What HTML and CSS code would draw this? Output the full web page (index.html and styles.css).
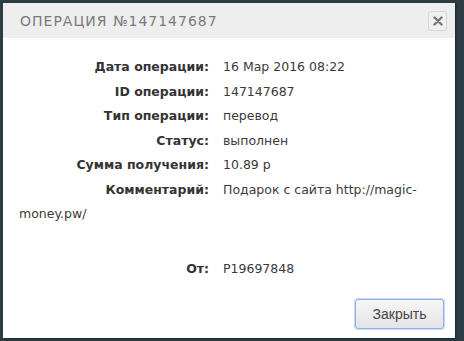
FILE: index.html
```html
<!DOCTYPE html>
<html lang="ru">
<head>
    <meta charset="UTF-8">
    <title>Операция</title>
    <link rel="stylesheet" href="styles.css">
</head>
<body>
    <div class="dialog">
        <div class="dialog-head">
            <span class="dialog-title">Операция №147147687</span>
            <button class="close" type="button">
                <svg width="10" height="10" viewBox="0 0 10 10"><path d="M1.5 1.5 L8.5 8.5 M8.5 1.5 L1.5 8.5" stroke="#777" stroke-width="2.4" stroke-linecap="round"/></svg>
            </button>
        </div>
        <div class="dialog-body">
            <div class="row"><span class="label">Дата операции:</span>16 Мар 2016 08:22</div>
            <div class="row"><span class="label">ID операции:</span>147147687</div>
            <div class="row"><span class="label">Тип операции:</span>перевод</div>
            <div class="row"><span class="label">Статус:</span>выполнен</div>
            <div class="row"><span class="label">Сумма получения:</span>10.89 р</div>
            <div class="row"><span class="label">Комментарий:</span>Подарок с сайта http://magic-money.pw/</div>
            <div class="row row-gap"><span class="label">От:</span>P19697848</div>
        </div>
        <div class="dialog-foot">
            <button class="btn" type="button">Закрыть</button>
        </div>
    </div>
</body>
</html>
```

FILE: styles.css
```css
html,
body {
    margin: 0;
    height: 100%;
    background: #2e3d43;
}

body {
    padding: 3px 9px 3px 3px;
    box-sizing: border-box;
    font-family: "DejaVu Sans", sans-serif;
}

.dialog {
    background: #fff;
    height: 335px;
    display: flex;
    flex-direction: column;
    box-shadow: 1px 1px 2px rgba(0, 0, 0, 0.4);
}

.dialog-head {
    background: #eee;
    height: 35px;
    display: flex;
    align-items: center;
    justify-content: space-between;
    padding: 0 8px 0 17px;
}

.dialog-title {
    color: #7a7a7a;
    font-size: 14px;
    letter-spacing: 1px;
    text-transform: uppercase;
}

.close {
    width: 19px;
    height: 20px;
    padding: 0;
    border: 1px solid #d6d6d6;
    border-radius: 3px;
    background: #f0f0f0;
    display: flex;
    align-items: center;
    justify-content: center;
}

.dialog-body {
    flex: 1;
    padding: 17px 10px 0 16px;
    font-size: 12.5px;
    line-height: 24.5px;
    color: #3a3a3a;
}

.label {
    display: inline-block;
    width: 190px;
    margin-right: 14px;
    text-align: right;
    font-weight: bold;
    color: #333;
}

.row-gap {
    margin-top: 30px;
}

.dialog-foot {
    display: flex;
    justify-content: flex-end;
    padding: 0 11px 9px 0;
}

.btn {
    width: 89px;
    height: 30px;
    font-family: "Liberation Sans", Arial, sans-serif;
    font-size: 14px;
    color: #444;
    border: 1px solid #8db2ea;
    border-radius: 3px;
    background: linear-gradient(#f6f6f6, #e4e4e4);
    box-shadow: 0 0 0 1px #c6d8f5;
}
```
